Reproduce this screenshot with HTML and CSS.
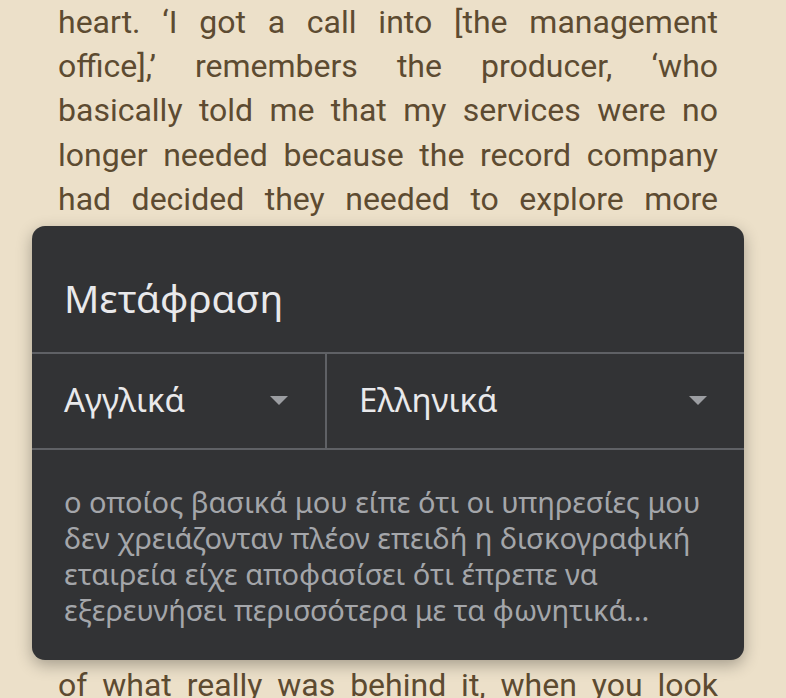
FILE: index.html
```html
<!DOCTYPE html>
<html lang="el">
<head>
    <meta charset="UTF-8">
    <meta name="viewport" content="width=device-width, initial-scale=1.0">
    <link rel="stylesheet" href="styles.css">
    <title>Μετάφραση</title>
</head>
<body>
    <main class="reader">
        <p class="page-text">
            <span class="line">heart. ‘I got a call into [the management</span>
            <span class="line">office],’ remembers the producer, ‘who</span>
            <span class="line">basically told me that my services were no</span>
            <span class="line">longer needed because the record company</span>
            <span class="line">had decided they needed to explore more</span>
            <span class="line">with the vocals and to try a different</span>
            <span class="line">kind of direction for the new record. It</span>
            <span class="line">was a huge blow at the time, and for a</span>
            <span class="line">while I could not really understand it or</span>
            <span class="line">see where it had come from. Nobody ever</span>
            <span class="line">sat me down and explained the thinking</span>
            <span class="line">behind that decision, so I was left with</span>
            <span class="line">my own guesses. Looking back now, I can</span>
            <span class="line">see that it was never only about the music</span>
            <span class="line">and I only got a clearer picture later on</span>
            <span class="line">of what really was behind it, when you look</span>
        </p>
    </main>

    <!-- Translation popup -->
    <section class="translate-card">
        <h2 class="translate-title">Μετάφραση</h2>
        <div class="lang-row">
            <div class="lang-select">
                <span>Αγγλικά</span>
                <span class="caret"></span>
            </div>
            <div class="lang-select">
                <span>Ελληνικά</span>
                <span class="caret"></span>
            </div>
        </div>
        <p class="translate-result">ο οποίος βασικά μου είπε ότι οι υπηρεσίες μου δεν χρειάζονταν πλέον επειδή η δισκογραφική εταιρεία είχε αποφασίσει ότι έπρεπε να εξερευνήσει περισσότερα με τα φωνητικά...</p>
    </section>
</body>
</html>
```

FILE: styles.css
```css
body {
    margin: 0;
    padding: 0;
    background-color: #ece0c9;
    height: 698px;
    overflow: hidden;
}

.reader {
    padding: 0 68px 0 58px;
}

.page-text {
    margin: 0;
    font-family: Roboto, sans-serif;
    font-size: 32px;
    line-height: 44.2px;
    color: #5d4b31;
}

.line {
    display: block;
    text-align: justify;
    text-align-last: justify;
}

.translate-card {
    position: absolute;
    left: 32px;
    top: 226px;
    width: 712px;
    height: 434px;
    background-color: #323335;
    border-radius: 13px;
    box-shadow: 0 5px 16px rgba(0, 0, 0, 0.3);
    font-family: 'Noto Sans', sans-serif;
    overflow: hidden;
}

.translate-title {
    margin: 0;
    height: 110px;
    padding: 16px 32px 0;
    display: flex;
    align-items: center;
    font-size: 39px;
    font-weight: normal;
    color: #e9e9eb;
}

.lang-row {
    display: grid;
    grid-template-columns: 293px 1fr;
    border-top: 2px solid #5f6165;
    border-bottom: 2px solid #5f6165;
}

.lang-select {
    height: 90px;
    padding: 0 37px 4px 32px;
    display: flex;
    align-items: center;
    justify-content: space-between;
    font-size: 33px;
    color: #e9e9eb;
}

.lang-select + .lang-select {
    border-left: 2px solid #5f6165;
}

.caret {
    width: 0;
    height: 0;
    margin-top: 2px;
    border-left: 9px solid transparent;
    border-right: 9px solid transparent;
    border-top: 9px solid #9c9ea2;
}

.translate-result {
    margin: 0;
    padding: 34px 40px 0 32px;
    font-size: 29px;
    line-height: 36px;
    color: #a4a6aa;
}
```
